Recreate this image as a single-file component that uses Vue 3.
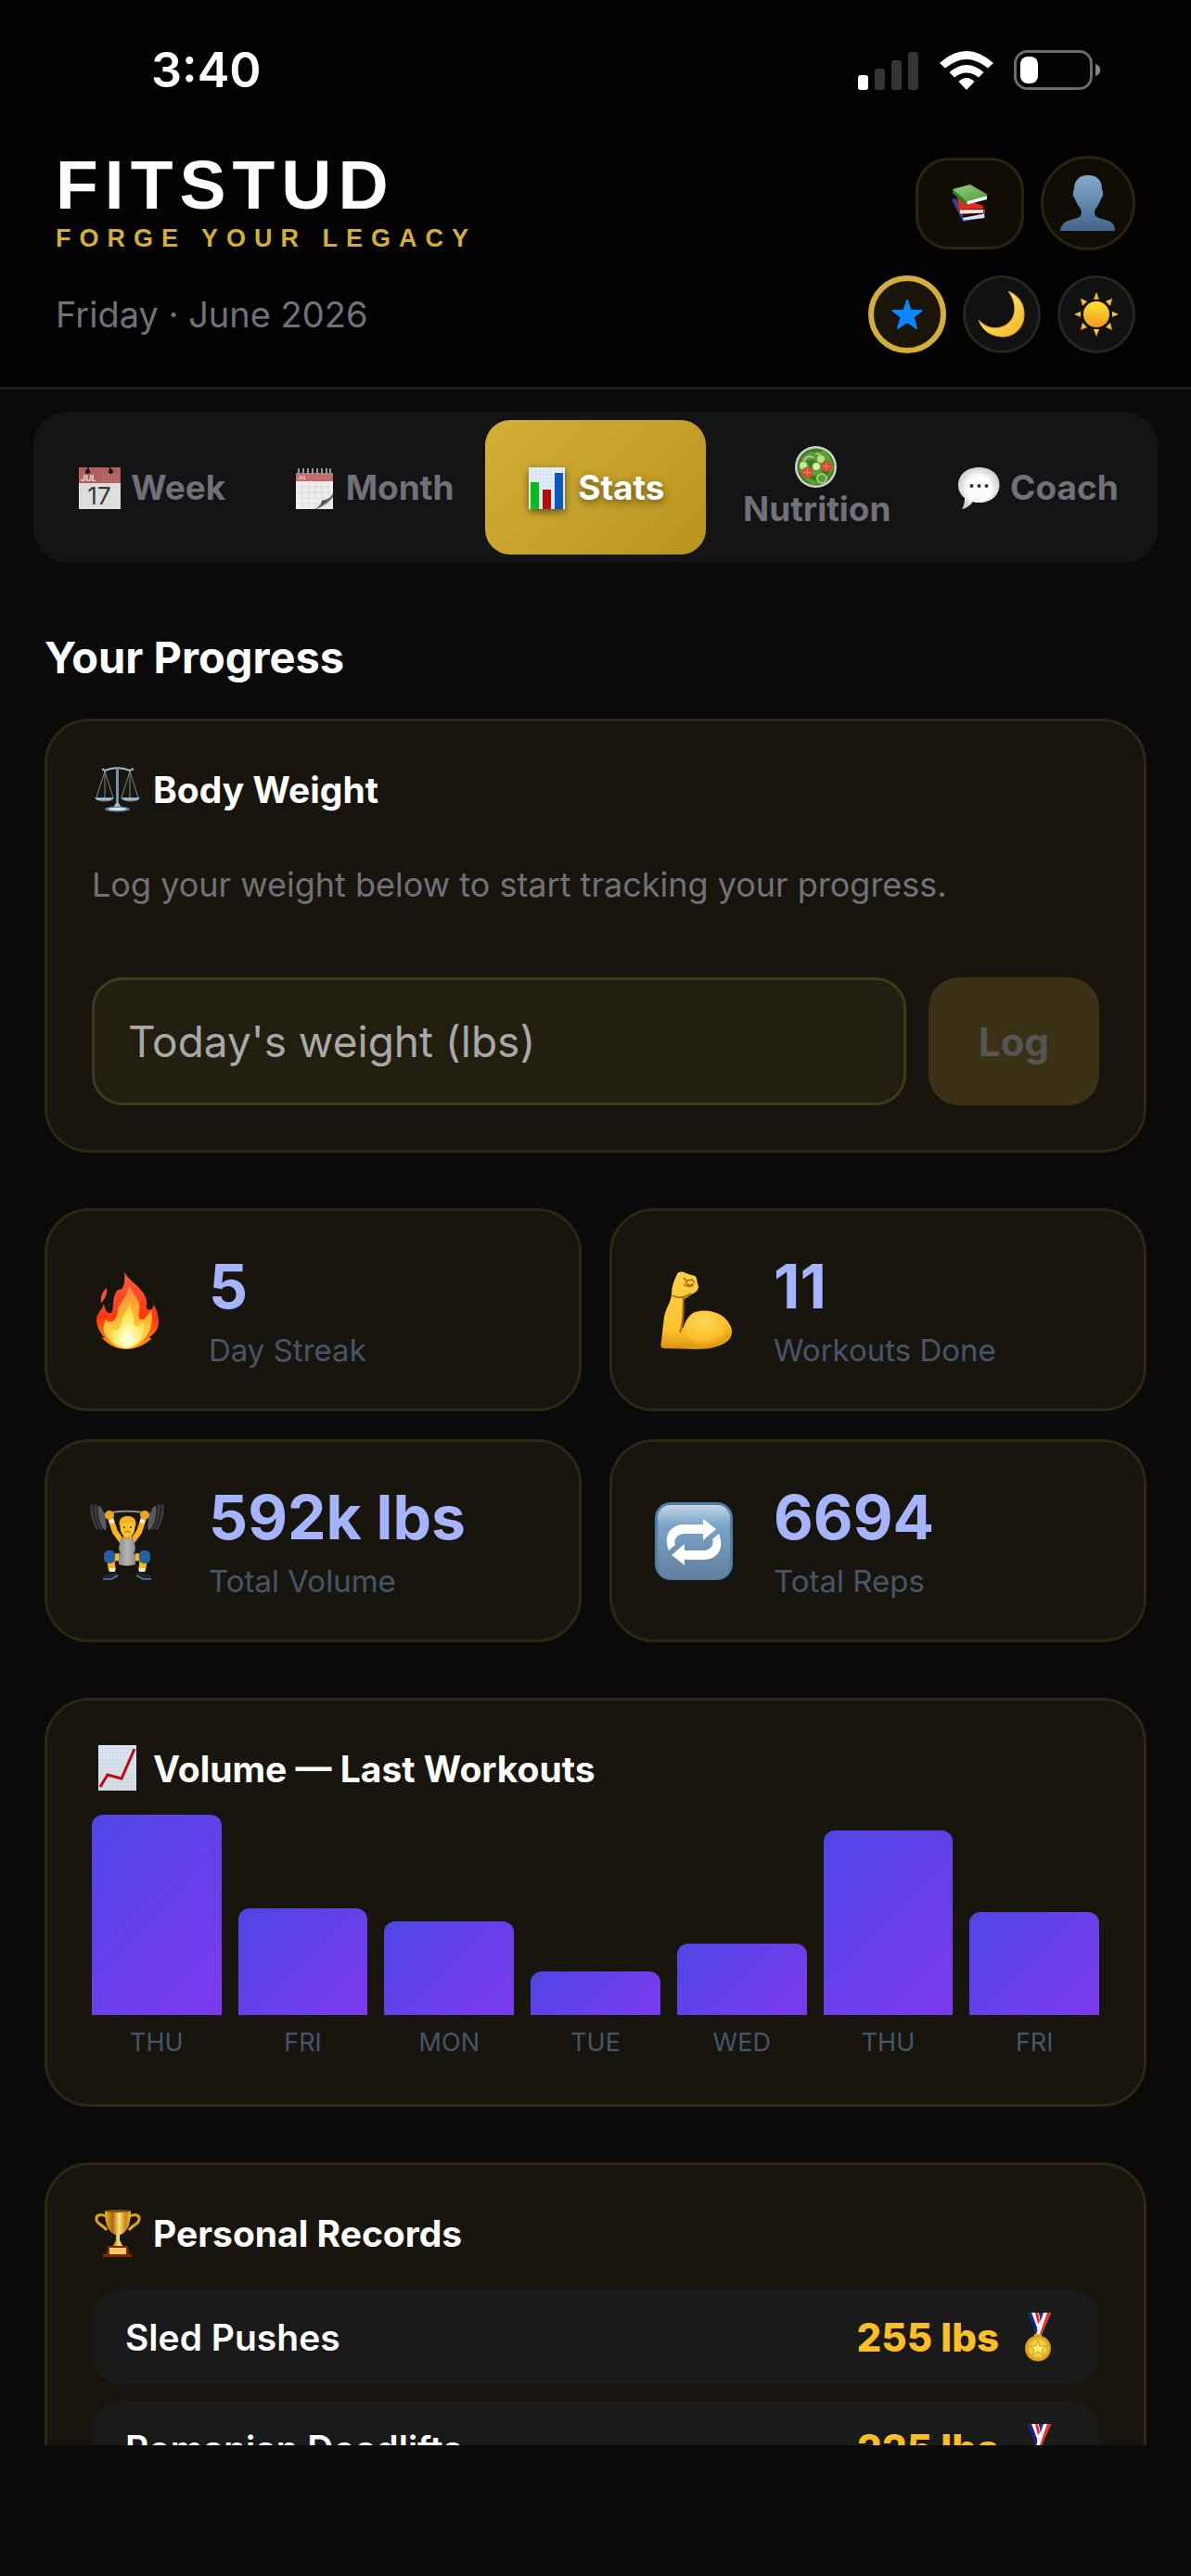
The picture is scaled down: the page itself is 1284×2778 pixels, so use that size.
<template>
  <div class="app">
    <!-- Icon set -->
    <svg class="sprite" aria-hidden="true">
      <defs>
        <linearGradient id="g-person" x1="0" y1="0" x2="0" y2="1">
          <stop offset="0" stop-color="#82abcd" />
          <stop offset="1" stop-color="#43658f" />
        </linearGradient>
        <linearGradient id="g-green" x1="0" y1="0" x2="1" y2="1">
          <stop offset="0" stop-color="#93cc7c" />
          <stop offset="1" stop-color="#4f9f3c" />
        </linearGradient>
        <linearGradient id="g-moon" x1="0" y1="0" x2="1" y2="1">
          <stop offset="0" stop-color="#fff08a" />
          <stop offset="0.6" stop-color="#f9cf4a" />
          <stop offset="1" stop-color="#f2b01e" />
        </linearGradient>
        <linearGradient id="g-sun" x1="0" y1="0" x2="0" y2="1">
          <stop offset="0" stop-color="#ffe135" />
          <stop offset="1" stop-color="#f39a1a" />
        </linearGradient>
        <linearGradient id="g-paper" x1="0" y1="0" x2="0" y2="1">
          <stop offset="0" stop-color="#d9e8f5" />
          <stop offset="1" stop-color="#d9dde2" />
        </linearGradient>
        <linearGradient id="g-curl" x1="0" y1="0" x2="1" y2="1">
          <stop offset="0" stop-color="#ececec" />
          <stop offset="0.5" stop-color="#4a4a4a" />
          <stop offset="1" stop-color="#e6e6e6" />
        </linearGradient>
        <radialGradient id="g-bubble">
          <stop offset="0.6" stop-color="#fbfbfb" />
          <stop offset="1" stop-color="#cfcfcf" />
        </radialGradient>
        <linearGradient id="g-fire" x1="0" y1="0" x2="0" y2="1">
          <stop offset="0" stop-color="#ff5a3c" />
          <stop offset="0.6" stop-color="#fb3a0c" />
          <stop offset="1" stop-color="#ff9a1a" />
        </linearGradient>
        <linearGradient id="g-flame" x1="0" y1="0" x2="0" y2="1">
          <stop offset="0" stop-color="#ff8a3a" />
          <stop offset="0.55" stop-color="#ffb62e" />
          <stop offset="1" stop-color="#ffe95e" />
        </linearGradient>
        <radialGradient id="g-core" cx="0.5" cy="0.8" r="0.7">
          <stop offset="0" stop-color="#fffff0" />
          <stop offset="0.5" stop-color="#fff07a" />
          <stop offset="1" stop-color="#ffd23a" />
        </radialGradient>
        <linearGradient id="g-arm" x1="0" y1="0" x2="0" y2="1">
          <stop offset="0" stop-color="#ffcf45" />
          <stop offset="0.75" stop-color="#fdc22f" />
          <stop offset="1" stop-color="#dd9010" />
        </linearGradient>
        <radialGradient id="g-muscle" cx="0.4" cy="0.3" r="0.7">
          <stop offset="0" stop-color="#ffd65a" />
          <stop offset="0.7" stop-color="#fbc02c" />
          <stop offset="1" stop-color="#e39b12" />
        </radialGradient>
        <linearGradient id="g-suit" x1="0" y1="0" x2="1" y2="0">
          <stop offset="0" stop-color="#8c8c8c" />
          <stop offset="0.5" stop-color="#b5b5b5" />
          <stop offset="1" stop-color="#8c8c8c" />
        </linearGradient>
        <linearGradient id="g-tile" x1="0" y1="0" x2="0" y2="1">
          <stop offset="0" stop-color="#c3d6e6" />
          <stop offset="0.28" stop-color="#7ba3c8" />
          <stop offset="1" stop-color="#627f9d" />
        </linearGradient>
        <linearGradient id="g-gold" x1="0" y1="0" x2="1" y2="0">
          <stop offset="0" stop-color="#f0b91c" />
          <stop offset="0.3" stop-color="#a8690a" />
          <stop offset="0.55" stop-color="#ffe27a" />
          <stop offset="0.8" stop-color="#c58614" />
          <stop offset="1" stop-color="#f2bd28" />
        </linearGradient>
        <radialGradient id="g-medal">
          <stop offset="0" stop-color="#fff06a" />
          <stop offset="0.75" stop-color="#f0c22a" />
          <stop offset="1" stop-color="#c98a1c" />
        </radialGradient>
        <linearGradient id="g-steel" x1="0" y1="0" x2="0" y2="1">
          <stop offset="0" stop-color="#8fb0cc" />
          <stop offset="1" stop-color="#5c7388" />
        </linearGradient>
      </defs>

      <symbol id="icon-books" viewBox="0 0 40 40">
        <path d="M0 16 L5 15 L13 36 L36 31 V36 L12 40 Z" fill="#2b4796" />
        <path d="M12 36 L35 31.500 V36 L13 38.500 Z" fill="#dfe3ea" />
        <path d="M6 13 L34 23 L34 26 L8 27 Z" fill="#e8281c" />
        <path d="M6 14 L8 32 L36 31 V27 H8 Z" fill="#c9231a" />
        <path d="M9 27.500 L34 27 V30.500 L9 31.500 Z" fill="#e9e9e9" />
        <path d="M1 5 V9 L15 22 L38 16 L37 14 L38 10 Z" fill="#2f7f25" />
        <path d="M16 18 L38 12 V16 L17 21.500 Z" fill="#ececec" />
        <path d="M1 5 L20 0 L39 11 L16 18 Z" fill="url(#g-green)" />
      </symbol>

      <symbol id="icon-person" viewBox="0 0 60 60">
        <path
          d="M30 0 C40 0 45 6 45 15 C47 19 46 24 44 25 C43 31 37 36 37 40 C37 46 42 46 48 48 C56 50 59 53 59 60 H0 C1 53 4 50 12 48 C18 46 23 46 23 40 C23 36 17 31 16 25 C14 24 13 19 15 15 C15 6 20 0 30 0 Z"
          fill="url(#g-person)" />
      </symbol>

      <symbol id="icon-star" viewBox="0 0 34 32">
        <path
          d="M17 1 L20.800 12 H32.500 L23.500 19 L27 31 L17 24 L7 31 L10.500 19 L1.500 12 H13.200 Z"
          fill="#0a86ff" stroke="#0a86ff" stroke-width="2" stroke-linejoin="round" />
      </symbol>

      <symbol id="icon-moon" viewBox="0 0 50 50">
        <path
          d="M32 0 C44 5 50 15 49 27 C48 41 37 50 24 49 C12 48 4 42 0 31 C9 41 21 42 30 36 C42 28 41 12 32 0 Z"
          fill="url(#g-moon)" stroke="#e3a51c" />
      </symbol>

      <symbol id="icon-sun" viewBox="0 0 48 48">
        <g fill="url(#g-sun)">
          <path d="M24 0 L27 8 H21 Z" />
          <path d="M24 48 L27 40 H21 Z" />
          <path d="M0 24 L7 21 V27 Z" />
          <path d="M48 24 L41 21 V27 Z" />
          <path d="M7 7 L14 10 L9 15 Z" />
          <path d="M41 7 L34 10 L39 15 Z" />
          <path d="M7 41 L14 38 L9 33 Z" />
          <path d="M41 41 L34 38 L39 33 Z" />
          <circle cx="24" cy="24" r="14" />
        </g>
      </symbol>

      <symbol id="icon-week" viewBox="0 0 45 45">
        <rect width="45" height="45" fill="#dedede" />
        <rect width="45" height="17" fill="#b35f5f" />
        <path d="M25 8 H43 M25 11 H43 M25 14 H43" stroke="#c98080" stroke-dasharray="2 1" />
        <path d="M10 0 V4 M33 0 L35 4" stroke="#161616" stroke-width="1.500" />
        <circle cx="9.500" cy="4.500" r="2.500" fill="#161616" />
        <circle cx="34.500" cy="4.500" r="2.500" fill="#161616" />
      </symbol>

      <symbol id="icon-month" viewBox="0 0 45 45">
        <rect x="2" y="6" width="40" height="39" fill="#eeeeee" />
        <rect x="2" y="6" width="40" height="9" fill="#c36c6c" />
        <path d="M3 21 H41 M3 27 H41 M3 33 H34 M3 39 H28 M9 16 V44 M16 16 V44 M23 16 V44 M30 16 V36 M37 16 V30" stroke="#dcdcdc" />
        <path d="M5 1 V8 M10 1 V8 M15 1 V8 M20 1 V8 M25 1 V8 M30 1 V8 M35 1 V8 M39 1 V8" stroke="#8b98a3" stroke-width="2" />
        <path d="M42 28 C38 36 30 35 30 36 C29 41 25 44 22 45 H42 Z" fill="url(#g-curl)" />
        <path d="M42 32 C38 38 30 43 24 45 H42 Z" fill="#e9e9e9" />
      </symbol>

      <symbol id="icon-stats" viewBox="0 0 45 45">
        <rect x="3" width="39" height="45" fill="#e3eef8" />
        <path d="M7 0 V45 M11 0 V45 M15 0 V45 M19 0 V45 M23 0 V45 M27 0 V45 M31 0 V45 M35 0 V45 M39 0 V45 M3 4 H42 M3 8 H42 M3 12 H42 M3 16 H42 M3 20 H42 M3 24 H42 M3 28 H42 M3 32 H42 M3 36 H42 M3 40 H42" stroke="#c6d8e8" stroke-width="0.500" />
        <rect x="5" y="16" width="9" height="29" fill="#08bd1d" />
        <rect x="18" y="24" width="9" height="21" fill="#bd0808" />
        <rect x="31" y="6" width="9" height="39" fill="#0b57bd" />
      </symbol>

      <symbol id="icon-nutrition" viewBox="0 0 45 45">
        <circle cx="22.500" cy="22.500" r="22.500" fill="#cfd3cf" />
        <circle cx="22.500" cy="22.500" r="20" fill="#3f7f24" />
        <path d="M8 12 L16 6 L24 8 L31 4 L38 12 L42 24 L36 34 L28 41 L18 42 L9 34 L4 24 Z" fill="#58a02f" />
        <path d="M12 16 L20 14 L26 20 L18 26 Z M28 26 L38 27 L34 34 Z M14 34 L22 31 L24 39 Z" fill="#3a7a20" />
        <path d="M10 16 A6 6 0 0 1 20 13 M22 8 A5 5 0 0 1 28 12" stroke="#e7b9c4" stroke-width="1.500" fill="none" />
        <circle cx="29" cy="35" r="5" fill="none" stroke="#b9d39a" stroke-width="1.500" />
        <circle cx="9" cy="21" r="4" fill="#c9e89a" />
        <circle cx="23" cy="22" r="4" fill="#d5efac" />
        <circle cx="28" cy="14" r="4" fill="#b6de84" />
        <circle cx="13.500" cy="28.500" r="6" fill="#dc4a36" />
        <circle cx="34" cy="22" r="6" fill="#dc4a36" />
        <path d="M13.500 24 V33 M9 28.500 H18 M34 18 V26 M30 22 H38" stroke="#f08a6e" />
      </symbol>

      <symbol id="icon-coach" viewBox="0 0 45 45">
        <path
          d="M22.500 0 C36 0 44.500 8 44.500 19 C44.500 30 36 38 22.500 38 C20 38 18 38 16 37 C13 41 9 44 4 45 C6 42 7 38 7 33 C3 30 0 25 0 19 C0 8 9 0 22.500 0 Z"
          fill="url(#g-bubble)" />
        <circle cx="14.500" cy="20" r="2" fill="#333333" />
        <circle cx="22.500" cy="20" r="2" fill="#333333" />
        <circle cx="30.500" cy="20" r="2" fill="#333333" />
      </symbol>

      <symbol id="icon-scale" viewBox="0 0 54 54">
        <path d="M14 8 L5 36 M14 8 V36 M14 8 L23 36 M41 8 L32 36 M41 8 V36 M41 8 L50 36" stroke="#7d868c" fill="none" />
        <path d="M11 5 L14 7 L20 5 L27.500 4 L35 5 L41 7 L45 5" stroke="#9fbccb" stroke-width="2" fill="none" />
        <rect x="26" y="3" width="3" height="43" fill="#6f93b3" />
        <path d="M3 36 H24 C22 42 6 42 3 36 Z M31 36 H52 C50 42 34 42 31 36 Z" fill="url(#g-steel)" />
        <path d="M5 38 H21 M34 38 H50" stroke="#c9d8e6" />
        <path d="M26 42 H29 L32 47 H23 Z" fill="#aebfce" />
        <ellipse cx="27.500" cy="48.500" rx="13.500" ry="3" fill="#5f7f9e" />
        <ellipse cx="27.500" cy="48.500" rx="10" ry="1.500" fill="#e6eef5" />
      </symbol>

      <symbol id="icon-fire" viewBox="0 0 84 84">
        <path d="M18 18 C13 22 11 28 12 34 C16 30 19 25 18 18 Z" fill="#f0523a" />
        <path
          d="M37 0 C40 10 57 16 61 31 C62 36 59 40 63 41 C67 42 69 39 68 35 C72 41 74 47 74 54 C74 62 70 67 64 71 L66 73 C58 80 49 84 39 84 C28 84 20 79 12 71 L16 72 C10 65 7 59 7 52 C7 45 13 42 15 35 C16 41 18 45 21 45 C26 46 24 36 26 28 C28 20 30 21 32 19 C34 22 39 14 37 0 Z"
          fill="url(#g-fire)" />
        <path
          d="M42 14 C45 25 56 31 53 43 C51 52 55 55 61 49 C64 45 65 43 66 42 C69 56 64 68 57 74 C51 80 45 83 39 83 C31 83 25 79 21 74 C14 67 13 60 17 52 C22 58 29 53 30 43 C30 34 41 29 42 14 Z"
          fill="url(#g-flame)" />
        <path
          d="M43 32 C44 44 49 48 47 57 C51 62 55 57 58 54 C60 66 54 78 40 83 C28 80 22 72 23 62 C28 66 34 62 34 54 C34 47 42 43 43 32 Z"
          fill="url(#g-core)" />
      </symbol>

      <symbol id="icon-arm" viewBox="0 0 84 84">
        <path
          d="M24 3 C26 0 30 0 33 2 L43 5 C46 7 45 11 47 16 C47 20 44 23 41 24 C37 27 32 29 31 31 L30 62 C33 54 36 47 43 44 C54 40 68 44 75 50 C81 56 83 61 83 66 C82 76 72 80 60 83 C45 85 28 83 9 83 C6 82 6 79 7 75 L10 49 C12 39 17 34 18 25 C18 17 20 11 24 3 Z"
          fill="url(#g-arm)" />
        <path d="M31 62 C35 52 41 45 54 43 C69 43 81 55 82 66 C80 76 68 79 56 81 C43 82 34 74 31 62 Z" fill="url(#g-muscle)" />
        <path d="M31 28 C30 42 32 55 27 66" fill="none" stroke="#a86509" stroke-width="2" />
        <path d="M19 26 C24 29 31 29 39 24 M31 7 L34 10 L40 9 L43 12 M33 11 L36 15 L42 14 M31 14 C34 17 39 17 41 15" fill="none" stroke="#a86509" stroke-width="1.500" />
      </symbol>

      <symbol id="icon-lifter" viewBox="0 0 84 84">
        <path d="M8 15 C28 8 52 8 72 15" fill="none" stroke="#8d8d8d" stroke-width="2" />
        <g fill="#3c3c3f" stroke="#151517">
          <ellipse cx="5" cy="16" rx="4" ry="15" transform="rotate(-14 5 16)" />
          <ellipse cx="9" cy="16" rx="4" ry="15" transform="rotate(-14 9 16)" />
          <ellipse cx="13" cy="17" rx="4" ry="14" fill="#5a5a5d" transform="rotate(-14 13 17)" />
          <ellipse cx="75" cy="16" rx="4" ry="15" transform="rotate(14 75 16)" />
          <ellipse cx="71" cy="16" rx="4" ry="15" transform="rotate(14 71 16)" />
          <ellipse cx="67" cy="17" rx="4" ry="14" fill="#5a5a5d" transform="rotate(14 67 17)" />
        </g>
        <path d="M14 14 H18 M62 14 H66" stroke="#2f65b5" stroke-width="4" />
        <path d="M22 17 L27 32 L35 43 M58 17 L53 32 L45 43" fill="none" stroke="#f8b61b" stroke-width="6" stroke-linejoin="round" />
        <path d="M21 21 L26 20 M54 20 L59 21" stroke="#f2f2f2" stroke-width="4" />
        <circle cx="21" cy="14" r="5" fill="#eda51b" />
        <circle cx="59" cy="14" r="5" fill="#eda51b" />
        <path d="M33 38 H47 L49 50 L46 60 L48 67 H32 L34 60 L31 50 Z" fill="url(#g-suit)" />
        <path d="M36 34 H45 V38 L40 41 L36 38 Z" fill="#e69d13" />
        <ellipse cx="40.500" cy="27" rx="8" ry="11" fill="#fdc22c" />
        <path d="M32 26 C30 17 36 15 41 15 C47 15 51 19 49 27 C47 22 44 22 41 21 C37 22 34 22 32 26 Z" fill="#f6b01c" />
        <circle cx="37" cy="27" r="1" fill="#5b3a08" />
        <circle cx="44" cy="27" r="1" fill="#5b3a08" />
        <path d="M37 33 C39 31 42 31 44 33" fill="none" stroke="#8d5708" />
        <path d="M32 59 L22 60 L24 74 M49 59 L58 60 L56 74" fill="none" stroke="#f8b61b" stroke-width="8" stroke-linejoin="round" />
        <path d="M31 55 C38 62 42 62 49 55 L49 67 C43 69 37 69 31 67 Z" fill="url(#g-suit)" />
        <rect x="15" y="52" width="12" height="14" rx="5" fill="#265f99" />
        <rect x="53" y="52" width="12" height="14" rx="5" fill="#265f99" />
        <path d="M21 73 H27 M53 73 H59" stroke="#f0f0f0" stroke-width="4" />
        <path d="M14 83 C14 78 20 76 28 76 L30 78 L24 83 Z M66 83 C66 78 60 76 52 76 L50 78 L56 83 Z" fill="#26262a" />
        <path d="M14 83 H23 L30 79 M66 83 H57 L50 79" fill="none" stroke="#3f86c4" stroke-width="1.500" />
      </symbol>

      <symbol id="icon-repeat" viewBox="0 0 84 84">
        <rect width="84" height="84" rx="17" fill="#527da6" />
        <rect x="3" y="3" width="78" height="80" rx="14" fill="url(#g-tile)" />
        <g fill="#ffffff">
          <path d="M15 52 C9 38 15 24 32 24 H52 V18 L66 29 L52 41 V34 H32 C23 34 20 41 22 46 Z" />
          <path d="M15 52 C9 38 15 24 32 24 H52 V18 L66 29 L52 41 V34 H32 C23 34 20 41 22 46 Z" transform="rotate(180 42 43)" />
        </g>
      </symbol>

      <symbol id="icon-trend" viewBox="0 0 54 54">
        <rect x="7" y="2" width="41" height="49" fill="url(#g-paper)" />
        <path d="M11 2 V51 M15 2 V51 M19 2 V51 M23 2 V51 M27 2 V51 M31 2 V51 M35 2 V51 M39 2 V51 M43 2 V51 M7 6 H48 M7 10 H48 M7 14 H48 M7 18 H48 M7 22 H48 M7 26 H48 M7 30 H48 M7 34 H48 M7 38 H48 M7 42 H48 M7 46 H48" stroke="#c3d3e0" stroke-width="0.500" />
        <path d="M9 47 L17 34 L32 38 L46 6" fill="none" stroke="#c4060d" stroke-width="3" />
      </symbol>

      <symbol id="icon-trophy" viewBox="0 0 54 54">
        <path d="M15 9 C9 6 4 8 5 13 C6 18 12 18 16 24 M41 9 C47 6 52 8 51 13 C50 18 44 18 40 24" fill="none" stroke="#d9a520" stroke-width="3" />
        <path d="M14 3 C14 18 18 27 26 29 V35 L22 42 H34 L30 35 V29 C38 27 42 18 42 3 Z" fill="url(#g-gold)" />
        <ellipse cx="28" cy="3.500" rx="14" ry="1.500" fill="#8a5205" />
        <path d="M17 41 H39 L40 49 L43 50 V53 H12 V50 L16 49 Z" fill="#7a2a05" />
        <rect x="19" y="43" width="18" height="7" fill="#f5cf62" />
      </symbol>

      <symbol id="icon-medal" viewBox="0 0 54 54">
        <path d="M38 1 L28 24 H22 L29 1 Z" fill="#f4f4f6" />
        <path d="M38 1 L28 24 H26 L34 1 Z" fill="#ee2a26" />
        <path d="M30 1 H27 L19 18 L22 24 Z" fill="#20309a" />
        <path d="M13 1 H25 L27 12 L23 21 Z" fill="#f4f4f6" />
        <path d="M13 1 H17 L23 17 V22 C18 17 15 9 13 1 Z" fill="#1a1f86" />
        <path d="M21 1 H24 L26 10 L24 13 Z" fill="#ee2a26" />
        <rect x="20" y="24" width="8" height="3" rx="1" fill="#e0b02a" />
        <circle cx="24" cy="39.500" r="14" fill="url(#g-medal)" />
        <circle cx="24" cy="39.500" r="11" fill="none" stroke="#d4a222" />
        <path d="M24 31 L26 37 H33 L28 41 L30 47 L24 43 L18 47 L20 41 L15 37 H22 Z" fill="#ffee75" stroke="#c9971d" />
      </symbol>
    </svg>

    <div class="status-bar">
      <span class="time">3:40</span>
      <div class="status-icons">
        <svg width="66" height="42" viewBox="0 0 66 42" aria-hidden="true">
          <rect x="0" y="26" width="11" height="16" rx="3" fill="#ffffff" />
          <rect x="18" y="19" width="11" height="23" rx="3" fill="#353535" />
          <rect x="36" y="10" width="11" height="32" rx="3" fill="#353535" />
          <rect x="54" y="1" width="11" height="41" rx="3" fill="#353535" />
        </svg>
        <svg width="58" height="42" viewBox="0 0 58 42" fill="#ffffff" aria-hidden="true">
          <path d="M0 13 Q29 -13 58 13 L52 18.500 Q29 -0.500 6 18.500 Z" />
          <path d="M10.500 23 Q29 7 47.500 23 L42 28.500 Q29 18.500 16 28.500 Z" />
          <path d="M20.500 33 Q29 25 37.500 33 L29 42 Z" />
        </svg>
        <svg width="94" height="43" viewBox="0 0 94 43" aria-hidden="true">
          <rect x="1.500" y="1.500" width="82" height="40" rx="13" fill="none" stroke="#6b6b6b" stroke-width="3" />
          <rect x="7" y="7" width="19" height="29" rx="8" fill="#ffffff" />
          <path d="M88 15 C95 17 95 26 88 28 Z" fill="#858585" />
        </svg>
      </div>
    </div>

    <header class="header">
      <div class="header-row">
        <div class="brand">
          <h1 class="brand-name">FITSTUD</h1>
          <p class="brand-tagline">FORGE YOUR LEGACY</p>
        </div>
        <div class="header-actions">
          <button class="library-btn" type="button" aria-label="Library">
            <svg width="40" height="40"><use href="#icon-books" /></svg>
          </button>
          <button class="profile-btn" type="button" aria-label="Profile">
            <svg width="60" height="60"><use href="#icon-person" /></svg>
          </button>
        </div>
      </div>
      <div class="header-row">
        <p class="date">Friday · June 2026</p>
        <div class="header-actions">
          <button
            v-for="theme in themes"
            :key="theme.id"
            class="theme-btn"
            :class="{ active: activeTheme === theme.id }"
            type="button"
            :aria-label="theme.id"
            @click="activeTheme = theme.id">
            <svg :width="theme.size" :height="theme.size"><use :href="`#icon-${theme.id}`" /></svg>
          </button>
        </div>
      </div>
    </header>

    <main class="content">
      <nav class="tabs">
        <button
          v-for="tab in tabs"
          :key="tab.id"
          class="tab"
          :class="{ active: activeTab === tab.id }"
          type="button"
          @click="activeTab = tab.id">
          <svg class="tab-icon" viewBox="0 0 45 45" aria-hidden="true">
            <use :href="`#icon-${tab.id}`" />
            <template v-if="tab.id === 'week'">
              <text x="2" y="15" font-size="9" fill="#f1dada">JUL</text>
              <text class="day" x="22" y="40" font-size="26" fill="#3a3a3a" text-anchor="middle">17</text>
            </template>
            <text v-if="tab.id === 'month'" x="4" y="13" font-size="5" fill="#f1dada">JUL</text>
          </svg>
          {{ tab.label }}
        </button>
      </nav>

      <div class="page">
        <h2 class="page-title">Your Progress</h2>

        <section class="card">
          <h3 class="card-title">
            <svg class="card-icon" aria-hidden="true"><use href="#icon-scale" /></svg>
            Body Weight
          </h3>
          <p class="hint">Log your weight below to start tracking your progress.</p>
          <form class="weight-form" @submit.prevent="logWeight">
            <input
              v-model="weight"
              class="weight-input"
              type="text"
              inputmode="decimal"
              aria-label="Today's weight (lbs)"
              placeholder="Today's weight (lbs)">
            <button class="log-btn" type="submit" :disabled="!weight">Log</button>
          </form>
        </section>

        <section class="stats">
          <div v-for="stat in stats" :key="stat.label" class="card stat">
            <svg class="stat-icon" aria-hidden="true"><use :href="`#icon-${stat.icon}`" /></svg>
            <div class="stat-text">
              <div class="stat-value">{{ stat.value }}</div>
              <div class="stat-label">{{ stat.label }}</div>
            </div>
          </div>
        </section>

        <section class="card">
          <h3 class="card-title">
            <svg class="card-icon" aria-hidden="true"><use href="#icon-trend" /></svg>
            Volume — Last Workouts
          </h3>
          <div class="chart">
            <div v-for="(item, index) in volumes" :key="index" class="bar-wrapper">
              <div class="bar-container">
                <div class="bar" :style="{ height: `${getBarHeight(item.value)}%` }"></div>
              </div>
              <div class="bar-label">{{ item.label }}</div>
            </div>
          </div>
        </section>

        <section class="card">
          <h3 class="card-title">
            <svg class="card-icon" aria-hidden="true"><use href="#icon-trophy" /></svg>
            Personal Records
          </h3>
          <ul class="records">
            <li v-for="record in records" :key="record.name" class="record">
              <span class="record-name">{{ record.name }}</span>
              <span class="record-value">{{ record.weight }} lbs</span>
              <svg class="card-icon" aria-hidden="true"><use href="#icon-medal" /></svg>
            </li>
          </ul>
        </section>
      </div>
    </main>
    <div class="safe-area"></div>
  </div>
</template>

<script setup>
import { ref, computed } from 'vue'

const activeTab = ref('stats')
const activeTheme = ref('star')
const weight = ref('')

const themes = [
  { id: 'star', size: 34 },
  { id: 'moon', size: 50 },
  { id: 'sun', size: 48 }
]

const tabs = [
  { id: 'week', label: 'Week' },
  { id: 'month', label: 'Month' },
  { id: 'stats', label: 'Stats' },
  { id: 'nutrition', label: 'Nutrition' },
  { id: 'coach', label: 'Coach' }
]

const stats = [
  { icon: 'fire', value: '5', label: 'Day Streak' },
  { icon: 'arm', value: '11', label: 'Workouts Done' },
  { icon: 'lifter', value: '592k lbs', label: 'Total Volume' },
  { icon: 'repeat', value: '6694', label: 'Total Reps' }
]

const volumes = [
  { label: 'THU', value: 216 },
  { label: 'FRI', value: 115 },
  { label: 'MON', value: 101 },
  { label: 'TUE', value: 47 },
  { label: 'WED', value: 77 },
  { label: 'THU', value: 199 },
  { label: 'FRI', value: 111 }
]

const records = [
  { name: 'Sled Pushes', weight: 255 },
  { name: 'Romanian Deadlifts', weight: 225 }
]

const maxVolume = computed(() => Math.max(...volumes.map(v => v.value), 1))

function getBarHeight(value) {
  return (value / maxVolume.value) * 100
}

function logWeight() {
  weight.value = ''
}
</script>

<style>
body {
  background: #0a0a0a;
}
</style>

<style scoped>
.app {
  display: flex;
  flex-direction: column;
  height: 100vh;
  overflow: hidden;
  background: #0a0a0a;
  color: #ffffff;
  font-family: Inter, 'Liberation Sans', sans-serif;
}

.app *,
.app *::before {
  box-sizing: border-box;
}

h1,
h2,
h3,
p,
ul {
  margin: 0;
  padding: 0;
}

button,
input {
  font-family: inherit;
}

button {
  cursor: pointer;
}

svg {
  flex-shrink: 0;
}

.sprite {
  position: absolute;
  width: 0;
  height: 0;
}

/* Status bar */
.status-bar {
  display: flex;
  justify-content: space-between;
  align-items: center;
  flex-shrink: 0;
  height: 163px;
  padding: 0 97px 12px 163px;
  background: #020202;
}

.time {
  font-size: 52px;
  font-weight: 600;
  line-height: 64px;
}

.status-icons {
  display: flex;
  align-items: center;
  gap: 22px;
}

/* Header */
.header {
  display: flex;
  flex-direction: column;
  gap: 22px;
  flex-shrink: 0;
  padding: 0 60px 36px;
  background: #020202;
  border-bottom: 3px solid #211b0c;
}

.header-row {
  display: flex;
  justify-content: space-between;
  align-items: center;
}

.brand {
  display: flex;
  flex-direction: column;
  gap: 4px;
  font-family: 'Liberation Sans', sans-serif;
}

.brand-name {
  font-size: 75px;
  font-weight: 700;
  line-height: 72px;
  letter-spacing: 7px;
}

.brand-tagline {
  font-size: 27px;
  font-weight: 700;
  line-height: 36px;
  letter-spacing: 9px;
  color: #d4af37;
}

.date {
  font-size: 38px;
  line-height: 48px;
  color: #71717a;
}

.header-actions {
  display: flex;
  align-items: center;
  gap: 18px;
}

.library-btn,
.profile-btn,
.theme-btn {
  display: flex;
  align-items: center;
  justify-content: center;
  padding: 0;
  background: #100d06;
  border: 3px solid #2b230e;
}

.library-btn {
  width: 117px;
  height: 99px;
  border-radius: 36px;
}

.profile-btn {
  width: 102px;
  height: 102px;
  border-radius: 50%;
}

.theme-btn {
  width: 84px;
  height: 84px;
  background: #111111;
  border-color: #2a2519;
  border-radius: 50%;
}

.theme-btn.active {
  background: #19150a;
  border: 6px solid #d4af37;
}

/* Tabs */
.content {
  flex: 1;
  min-height: 0;
  overflow: hidden;
}

.tabs {
  display: flex;
  margin: 24px 36px 0;
  padding: 9px;
  background: #141414;
  border-radius: 36px;
}

.tab {
  flex: 1;
  min-width: 0;
  padding: 27px 18px;
  background: none;
  border: none;
  border-radius: 27px;
  color: #71717a;
  font-size: 37px;
  font-weight: 700;
  line-height: 45px;
}

.tab.active {
  background: linear-gradient(135deg, #d4af37, #b8941f);
  color: #ffffff;
  text-shadow: 0 3px 9px rgba(0, 0, 0, 0.5);
}

.tab-icon {
  width: 45px;
  height: 45px;
  margin-right: 2px;
  vertical-align: -10px;
}

.tab.active .tab-icon {
  filter: drop-shadow(0 3px 4px rgba(0, 0, 0, 0.5));
}

.day {
  font-weight: 400;
}

/* Page */
.page {
  display: flex;
  flex-direction: column;
  gap: 60px;
  padding: 72px 48px 60px;
}

.page-title {
  margin-bottom: -24px;
  font-size: 47px;
  font-weight: 700;
  line-height: 60px;
}

.card {
  padding: 48px;
  background: #18150e;
  border: 3px solid #2f2713;
  border-radius: 48px;
}

.card-title {
  display: flex;
  align-items: center;
  gap: 12px;
  height: 50px;
  font-size: 39px;
  font-weight: 700;
}

.card-icon {
  width: 54px;
  height: 54px;
}

.hint {
  margin: 48px 0 70px;
  color: #71717a;
  font-size: 36px;
  line-height: 60px;
}

.weight-form {
  display: flex;
  gap: 24px;
}

.weight-input {
  flex: 1;
  min-width: 0;
  height: 138px;
  padding: 0 36px;
  background: #221f11;
  border: 3px solid #463919;
  border-radius: 33px;
  color: #ffffff;
  font-size: 46px;
}

.weight-input::placeholder {
  color: #a9a9a9;
  opacity: 1;
}

.log-btn {
  padding: 0 54px;
  background: #d4af37;
  border: none;
  border-radius: 33px;
  color: #000000;
  font-size: 42px;
  font-weight: 700;
}

.log-btn:disabled {
  background: #3b3116;
  color: #555555;
}

/* Stat tiles */
.stats {
  display: grid;
  grid-template-columns: 1fr 1fr;
  gap: 30px;
}

.stat {
  display: flex;
  align-items: center;
  gap: 44px;
  padding: 42px 46px;
}

.stat-icon {
  width: 84px;
  height: 84px;
}

.stat-text {
  display: flex;
  flex-direction: column;
  gap: 9px;
}

.stat-value {
  color: #a5b4fc;
  font-size: 66px;
  font-weight: 700;
  line-height: 78px;
}

.stat-label {
  color: #475569;
  font-size: 33px;
  line-height: 42px;
}

/* Volume chart */
.chart {
  display: flex;
  gap: 18px;
  margin-top: 25px;
}

.bar-wrapper {
  flex: 1;
  display: flex;
  flex-direction: column;
  gap: 12px;
}

.bar-container {
  display: flex;
  align-items: flex-end;
  height: 216px;
}

.bar {
  width: 100%;
  background: linear-gradient(135deg, #4f46e5, #7c3aed);
  border-radius: 12px 12px 0 0;
}

.bar-label {
  color: #475569;
  font-size: 27px;
  line-height: 36px;
  text-align: center;
}

/* Personal records */
.records {
  display: flex;
  flex-direction: column;
  gap: 18px;
  margin-top: 36px;
  list-style: none;
}

.record {
  display: flex;
  align-items: center;
  gap: 18px;
  height: 102px;
  padding: 0 36px;
  background: #1a1a1a;
  border-radius: 33px;
}

.record-name {
  flex: 1;
  font-size: 39px;
  font-weight: 600;
}

.record-value {
  color: #fbbf24;
  font-size: 42px;
  font-weight: 800;
}

.safe-area {
  flex-shrink: 0;
  height: 141px;
}
</style>
